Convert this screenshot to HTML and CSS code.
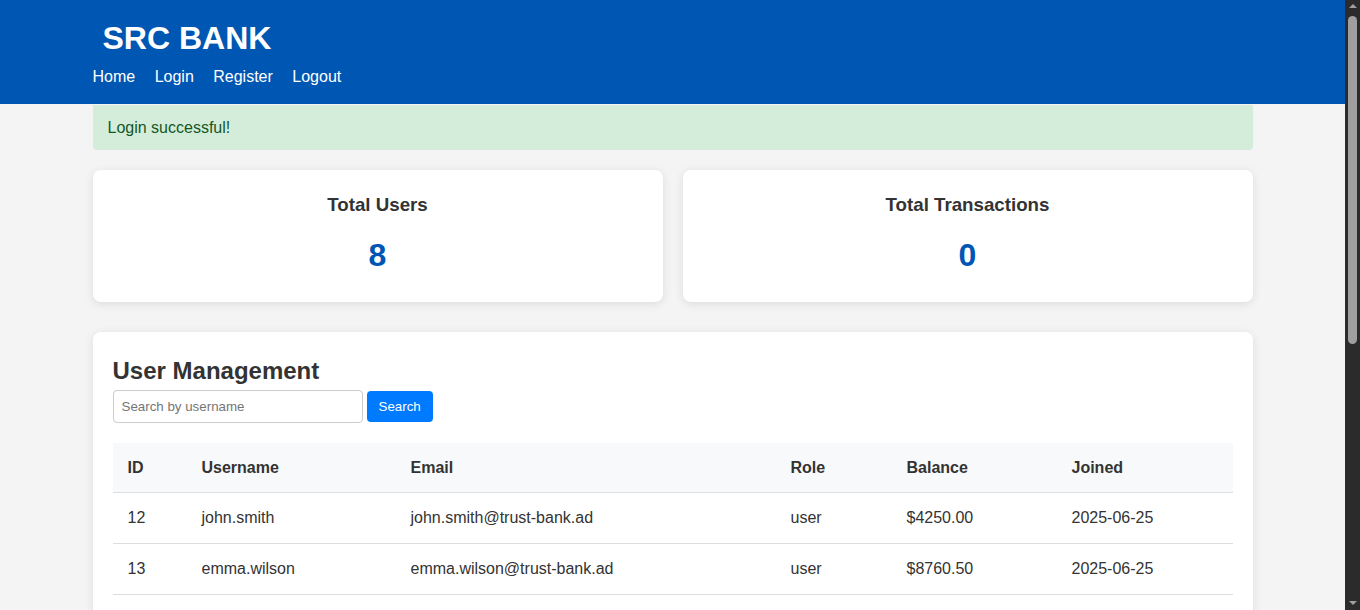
FILE: index.html
```html
<!DOCTYPE html>
<html lang="en">
<head>
<meta charset="utf-8">
<title>SRC BANK - Admin</title>
<link rel="stylesheet" href="styles.css">
</head>
<body>
<div class="page">
<header class="site-header">
  <div class="container">
    <h1 class="brand">SRC BANK</h1>
    <nav class="nav">
      <a href="#">Home</a>
      <a href="#">Login</a>
      <a href="#">Register</a>
      <a href="#">Logout</a>
    </nav>
  </div>
</header>

<main class="container">
  <div class="alert">Login successful!</div>

  <div class="stats">
    <div class="card stat">
      <h3>Total Users</h3>
      <div class="stat-num">8</div>
    </div>
    <div class="card stat">
      <h3>Total Transactions</h3>
      <div class="stat-num">0</div>
    </div>
  </div>

  <section class="card section">
    <h2>User Management</h2>
    <form class="search">
      <input type="text" placeholder="Search by username">
      <button type="button">Search</button>
    </form>
    <table class="table">
      <colgroup>
        <col class="c-id"><col class="c-user"><col class="c-email"><col class="c-role"><col class="c-bal"><col class="c-date">
      </colgroup>
      <thead>
        <tr><th>ID</th><th>Username</th><th>Email</th><th>Role</th><th>Balance</th><th>Joined</th></tr>
      </thead>
      <tbody>
        <tr><td>12</td><td>john.smith</td><td>john.smith@trust-bank.ad</td><td>user</td><td>$4250.00</td><td>2025-06-25</td></tr>
        <tr><td>13</td><td>emma.wilson</td><td>emma.wilson@trust-bank.ad</td><td>user</td><td>$8760.50</td><td>2025-06-25</td></tr>
        <tr><td>14</td><td>michael.brown</td><td>michael.brown@trust-bank.ad</td><td>user</td><td>$1520.75</td><td>2025-06-25</td></tr>
        <tr><td>15</td><td>sarah.jones</td><td>sarah.jones@trust-bank.ad</td><td>user</td><td>$12340.00</td><td>2025-06-25</td></tr>
        <tr><td>16</td><td>david.lee</td><td>david.lee@trust-bank.ad</td><td>user</td><td>$560.20</td><td>2025-06-25</td></tr>
        <tr><td>17</td><td>lisa.taylor</td><td>lisa.taylor@trust-bank.ad</td><td>user</td><td>$3075.90</td><td>2025-06-25</td></tr>
        <tr><td>18</td><td>robert.clark</td><td>robert.clark@trust-bank.ad</td><td>user</td><td>$980.00</td><td>2025-06-25</td></tr>
        <tr><td>19</td><td>admin</td><td>admin@trust-bank.ad</td><td>admin</td><td>$0.00</td><td>2025-06-25</td></tr>
      </tbody>
    </table>
  </section>

  <section class="card section">
    <h2>Recent Transactions</h2>
    <table class="table">
      <thead>
        <tr><th>ID</th><th>From</th><th>To</th><th>Amount</th><th>Date</th></tr>
      </thead>
      <tbody>
        <tr><td colspan="5">No transactions found.</td></tr>
      </tbody>
    </table>
  </section>
</main>

<footer class="footer">&copy; 2025 SRC Bank. All rights reserved.</footer>
</div>

<div class="scrollbar" aria-hidden="true">
  <span class="sb-arrow sb-up"></span>
  <span class="sb-thumb"></span>
  <span class="sb-arrow sb-down"></span>
</div>
</body>
</html>
```

FILE: styles.css
```css
* { box-sizing: border-box; }

html, body { scrollbar-width: none; }
body::-webkit-scrollbar { display: none; }

body {
  margin: 0;
  background: #f4f4f4;
  color: #333;
  font-family: "Liberation Sans", Arial, sans-serif;
  font-size: 16px;
}

.page {
  margin-right: 15px;
}

.container {
  max-width: 1160px;
  margin: 0 auto;
}

.site-header {
  background: #0056b3;
  color: #fff;
  padding: 20px 0 18px;
}

.brand {
  margin: 0 0 11px;
  padding-left: 10px;
  font-size: 32px;
  line-height: 37px;
  font-weight: bold;
}

.nav {
  line-height: 18px;
}

.nav a {
  color: #fff;
  text-decoration: none;
  margin-right: 15px;
}

.alert {
  background: #d4edda;
  color: #155724;
  padding: 13px 15px;
  line-height: 19px;
  border-radius: 0 0 4px 4px;
  margin: 1px 0 20px;
}

.card {
  background: #fff;
  border-radius: 8px;
  box-shadow: 0 2px 10px rgba(0, 0, 0, 0.1);
}

.stats {
  display: grid;
  grid-template-columns: 1fr 1fr;
  gap: 20px;
  margin-bottom: 30px;
}

.stat {
  text-align: center;
  padding: 24px 20px 28px;
}

.stat h3 {
  margin: 0 0 21px;
  font-size: 18.72px;
  line-height: 22px;
}

.stat-num {
  color: #0056b3;
  font-size: 32px;
  line-height: 37px;
  font-weight: bold;
}

.section {
  padding: 20px;
  margin-bottom: 30px;
}

.section h2 {
  margin: 5px 0 5px;
  font-size: 24px;
  line-height: 28px;
}

.search {
  display: flex;
  align-items: center;
  gap: 4px;
  margin: 0 0 20px;
}

.search input {
  width: 250px;
  height: 33px;
  padding: 8px;
  border: 1px solid #ccc;
  border-radius: 4px;
  font-family: "Liberation Sans", Arial, sans-serif;
  font-size: 13.33px;
  color: #333;
}

.search input::placeholder { color: #757575; }

.search button {
  height: 31px;
  padding: 0 12px;
  border: none;
  border-radius: 4px;
  background: #007bff;
  color: #fff;
  font-family: "Liberation Sans", Arial, sans-serif;
  font-size: 13.33px;
}

.table {
  width: 100%;
  border-collapse: collapse;
  table-layout: fixed;
}

.c-id { width: 74px; }
.c-user { width: 209px; }
.c-email { width: 380px; }
.c-role { width: 116px; }
.c-bal { width: 165px; }
.c-date { width: 176px; }

.table th,
.table td {
  text-align: left;
  padding: 15px;
  line-height: 20px;
  border-bottom: 1px solid #ddd;
}

.table th {
  background: #f8f9fa;
  font-weight: bold;
  padding-top: 15px;
  padding-bottom: 14px;
}

.footer {
  text-align: center;
  color: #666;
  font-size: 14px;
  padding: 20px 0 30px;
}

/* imitation of the browser's dark scrollbar, overlaying the right edge */
.scrollbar {
  position: fixed;
  top: 0;
  right: 0;
  width: 15px;
  height: 100vh;
  background: #2b2b2b;
  display: flex;
  flex-direction: column;
  align-items: center;
}

.sb-arrow {
  width: 0;
  height: 0;
  border-left: 4px solid transparent;
  border-right: 4px solid transparent;
  flex: none;
}

.sb-up {
  margin-top: 4px;
  border-bottom: 4px solid #a0a0a0;
}

.sb-down {
  margin-top: auto;
  margin-bottom: 5px;
  border-top: 4px solid #a0a0a0;
}

.sb-thumb {
  width: 9px;
  height: 328px;
  margin-top: 8px;
  border-radius: 5px;
  background: #9f9f9f;
}
```
